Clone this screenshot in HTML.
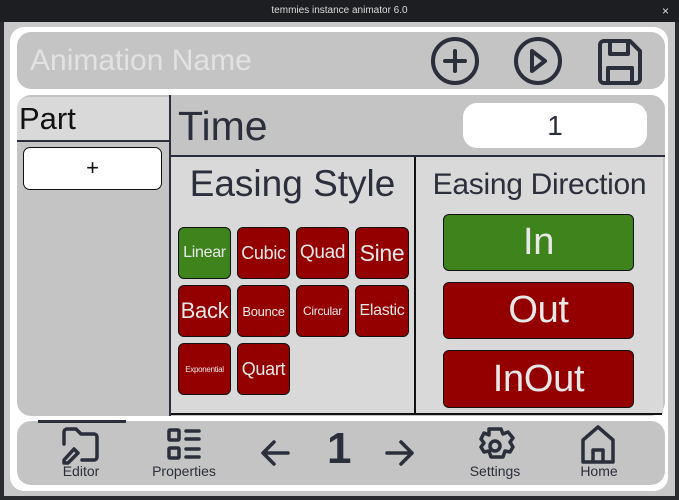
<!DOCTYPE html><html><head><style>
*{margin:0;padding:0;box-sizing:border-box}
body{width:679px;height:500px;background:#2a2b2e;font-family:"Liberation Sans",sans-serif;position:relative;overflow:hidden}
.a{position:absolute}
.t{color:#2b2e3b}
.btn{position:absolute;border:1.5px solid #111;border-radius:6px;background:#940000;color:#e8e8e8;display:flex;align-items:center;justify-content:center;white-space:nowrap;overflow:hidden;letter-spacing:-0.3px}
.g{background:#3f831d}
.nl{position:absolute;top:463px;font-size:14px;color:#2b2e3b;text-align:center;width:100px}
</style></head><body>
<div class="a" style="left:0;top:0;width:679px;height:22px;background:#1d1e21;color:#ddd;font-size:10px;text-align:center;line-height:22px">temmies instance animator 6.0</div>
<div class="a" style="right:10px;top:4px;color:#ddd;font-size:12px">×</div>
<div class="a" style="left:4px;top:22px;width:671px;height:474px;background:#c8c8c8"></div>
<div class="a" style="left:10px;top:27px;width:658px;height:464px;background:#fff;border-radius:14px"></div>
<div class="a" style="left:17px;top:32px;width:648px;height:57px;background:#c3c4c3;border-radius:14px"></div>
<div class="a" style="left:30px;top:44px;font-size:30px;color:#e2e2e2">Animation Name</div>
<svg class="a" style="left:420px;top:36px" width="240" height="52" fill="none" stroke="#2b2e3b" stroke-width="4" stroke-linecap="round" stroke-linejoin="round">
<circle cx="35" cy="25" r="22"/><path d="M35 15v20M25 25h20"/>
<circle cx="118" cy="25" r="22"/><path d="M112 15v20l13-10z"/>
<path d="M184 5h26l10 10v28a4 4 0 0 1-4 4h-32a4 4 0 0 1-4-4V9a4 4 0 0 1 4-4z"/><path d="M190 6v12h18V6M188 46V32h24v14"/>
</svg>
<div class="a" style="left:17px;top:95px;width:648px;height:321px;background:#c3c4c3;border-radius:14px"></div>
<div class="a" style="left:17px;top:97px;width:152px;height:44px;background:#d9d9d9;border-top-left-radius:12px"></div>
<div class="a t" style="left:19px;top:101px;font-size:31px;color:#111">Part</div>
<div class="a" style="left:17px;top:140px;width:153px;height:2px;background:#2b2e3b"></div>
<div class="a" style="left:23px;top:147px;width:139px;height:43px;background:#fff;border:1.5px solid #111;border-radius:7px;text-align:center;font-size:22px;line-height:40px;color:#111">+</div>
<div class="a" style="left:169px;top:95px;width:2px;height:321px;background:#2b2e3b"></div>
<div class="a t" style="left:178px;top:103px;font-size:41px">Time</div>
<div class="a" style="left:463px;top:103px;width:184px;height:45px;background:#fff;border-radius:14px;text-align:center;font-size:28px;line-height:45px;color:#2b2e3b">1</div>
<div class="a" style="left:171px;top:155px;width:494px;height:2px;background:#2b2e3b"></div>
<div class="a" style="left:171px;top:157px;width:243px;height:257px;background:#d8d9d8"></div>
<div class="a" style="left:416px;top:157px;width:247px;height:257px;background:#d8d9d8"></div>
<div class="a" style="left:414px;top:157px;width:2px;height:258px;background:#111"></div>
<div class="a" style="left:171px;top:413px;width:491px;height:2px;background:#111"></div>
<div class="a t" style="left:171px;top:163px;width:243px;text-align:center;font-size:37px">Easing Style</div>
<div class="a t" style="left:416px;top:168px;width:247px;text-align:center;font-size:30px;letter-spacing:-0.3px">Easing Direction</div>
<div class="btn g" style="left:178px;top:227px;width:53px;height:52px;font-size:16px">Linear</div>
<div class="btn" style="left:237px;top:227px;width:53px;height:52px;font-size:18px">Cubic</div>
<div class="btn" style="left:296px;top:227px;width:53px;height:52px;font-size:19px">Quad</div>
<div class="btn" style="left:355px;top:227px;width:54px;height:52px;font-size:23px">Sine</div>
<div class="btn" style="left:178px;top:285px;width:53px;height:52px;font-size:22px">Back</div>
<div class="btn" style="left:237px;top:285px;width:53px;height:52px;font-size:13px">Bounce</div>
<div class="btn" style="left:296px;top:285px;width:53px;height:52px;font-size:12px">Circular</div>
<div class="btn" style="left:355px;top:285px;width:54px;height:52px;font-size:16px">Elastic</div>
<div class="btn" style="left:178px;top:343px;width:53px;height:52px;font-size:8px">Exponential</div>
<div class="btn" style="left:237px;top:343px;width:53px;height:52px;font-size:18px">Quart</div>
<div class="btn g" style="left:443px;top:214px;width:191px;height:57px;font-size:38px">In</div>
<div class="btn" style="left:443px;top:282px;width:191px;height:57px;font-size:38px">Out</div>
<div class="btn" style="left:443px;top:350px;width:191px;height:58px;font-size:38px">InOut</div>
<div class="a" style="left:17px;top:421px;width:648px;height:64px;background:#c3c4c3;border-radius:14px"></div>
<div class="a" style="left:38px;top:420px;width:88px;height:3px;background:#2b2e3b"></div>
<svg class="a" style="left:0;top:420px" width="679" height="50" fill="none" stroke="#2b2e3b" stroke-width="3.5" stroke-linecap="round" stroke-linejoin="round">
<path d="M64 24V12a3 3 0 0 1 3-3h9l5 5h13a3 3 0 0 1 3 3v20a3 3 0 0 1-3 3H82M64 40l10-11 4 4-10 10h-4z"/>
<rect x="169" y="10" width="10" height="10" rx="1"/><rect x="169" y="28" width="10" height="10" rx="1"/><path d="M186 11h13M186 19h13M186 29h13M186 37h13"/>
<path d="M263 33h25M274 22l-11 11 11 11"/>
<path d="M387 33h25M401 22l11 11-11 11"/>
<circle cx="495" cy="26" r="5"/><path d="M489 9h12l2 5 5-2 5 6-3 4 3 5-3 5-5-1-2 6h-12l-2-6-5 1-3-5 3-4-3-4 3-6 5 2z"/>
<path d="M583 42V20l15-13 15 13v22zM593 42V30h10v12"/>
</svg>
<div class="a t" style="left:327px;top:424px;font-size:44px;font-weight:bold">1</div>
<div class="nl" style="left:31px">Editor</div>
<div class="nl" style="left:134px">Properties</div>
<div class="nl" style="left:445px">Settings</div>
<div class="nl" style="left:549px">Home</div>
</body></html>
